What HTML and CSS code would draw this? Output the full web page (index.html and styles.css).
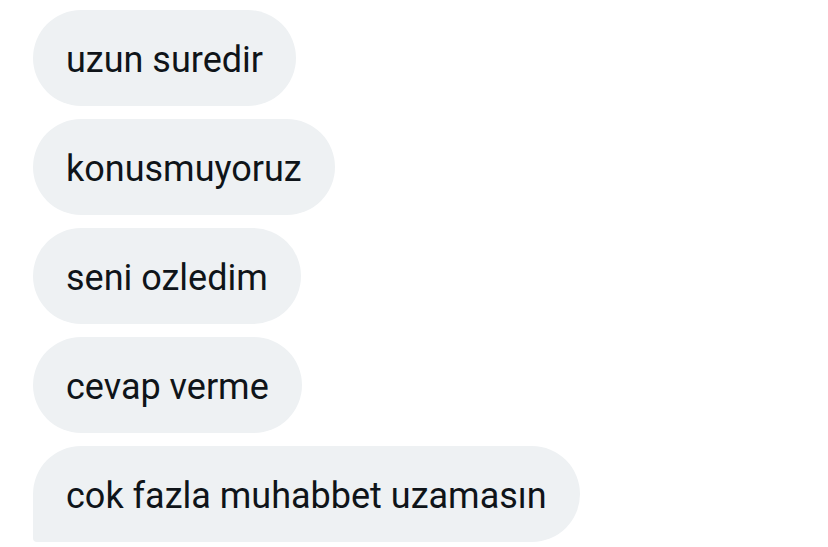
FILE: index.html
```html
<!DOCTYPE html>
<html lang="tr">
<head>
    <meta charset="UTF-8">
    <meta name="viewport" content="width=device-width, initial-scale=1.0">
    <title>Mesajlar</title>
    <link rel="stylesheet" href="styles.css">
</head>
<body>

<div class="thread">
    <div class="bubble">uzun suredir</div>
    <div class="bubble">konusmuyoruz</div>
    <div class="bubble">seni ozledim</div>
    <div class="bubble">cevap verme</div>
    <div class="bubble last">cok fazla muhabbet uzamasın</div>
</div>

</body>
</html>
```

FILE: styles.css
```css
body {
    margin: 0;
    background-color: #ffffff;
    font-family: Roboto, "Liberation Sans", sans-serif;
}

.thread {
    display: flex;
    flex-direction: column;
    align-items: flex-start;
    gap: 13px;
    padding: 10px 0 0 33px;
}

.bubble {
    box-sizing: border-box;
    height: 96px;
    line-height: 92px;
    padding: 4px 33px 0;
    background-color: #eef1f3;
    color: #0f1419;
    font-size: 36px;
    border-radius: 48px;
    white-space: nowrap;
}

/* last message in the group gets a flat corner */
.bubble.last {
    border-bottom-left-radius: 4px;
}
```
